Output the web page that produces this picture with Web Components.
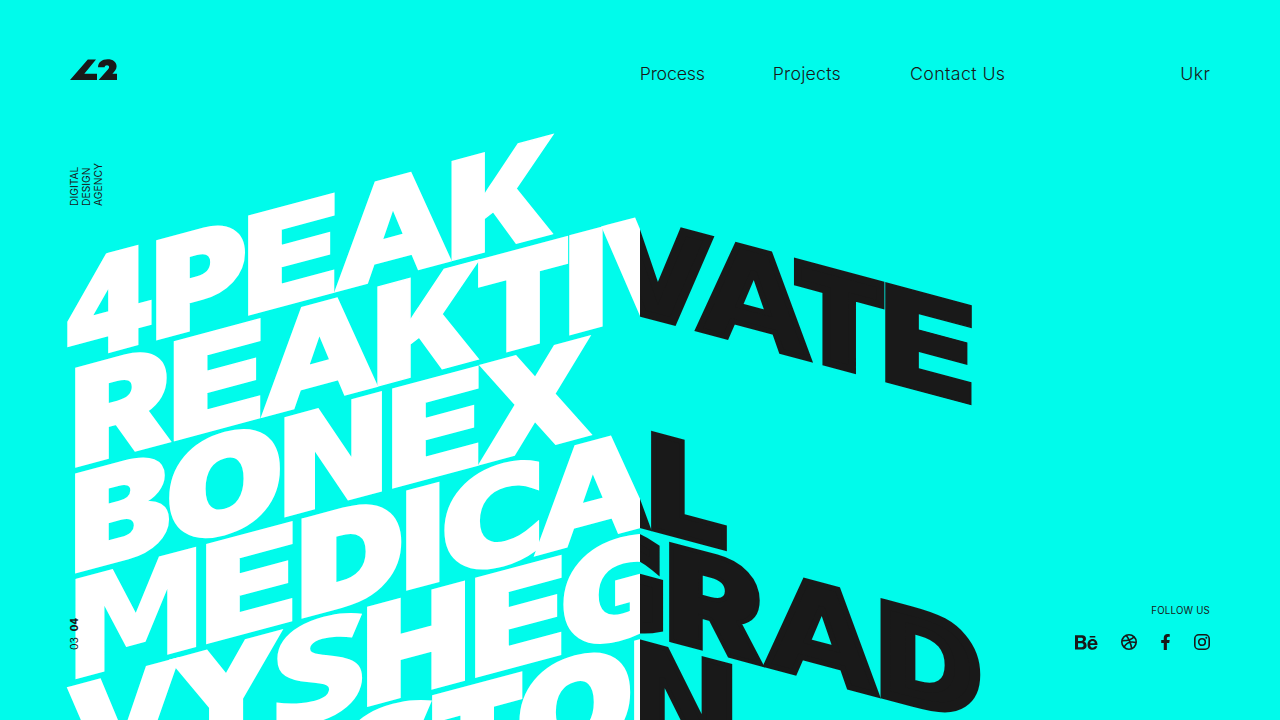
<!DOCTYPE html>
<html lang="en">
<head>
<meta charset="utf-8">
<title>42 — Digital Design Agency</title>
<style>
html,body{margin:0;height:100%;overflow:hidden;background:#00fbeb;color:#191919;font-family:Inter,sans-serif}
</style>
</head>
<body>
<agency-page></agency-page>

<script>
/* Project titles. Each glyph: [char, ink left, ink right] in unfolded page pixels. */
const LINES = [
  {name: '4PEAK', glyphs: [['4',67.3,151.5],['P',156.3,245],['E',248.3,334.6],['A',335.4,450.4],['K',451.3,553.4]]},
  {name: 'REAKTIVATE', glyphs: [['R',75.3,170.2],['E',174,260.6],['A',261.8,376.7],['K',377.3,479.6],['T',478,568.2],['I',569.3,602.7],['V',603.2,712.8],['A',695.6,811.8],['T',793.8,884.5],['E',885.3,971.8]]},
  {name: 'BONEX', glyphs: [['B',75.3,169.2],['O',169.3,280],['N',284.3,382],['E',392.3,478.6],['X',481.6,588.4]]},
  {name: 'MEDICAL', glyphs: [['M',75.3,196],['E',206.3,292.6],['D',301.3,401.3],['I',406.3,439.5],['C',444.5,539],['A',534.9,650.4],['L',651.3,727]]},
  {name: 'VYSHEGRAD', glyphs: [['V',68.6,178],['Y',173,279.2],['S',276.4,362],['H',367.3,465],['E',475.3,561.6],['G',563.3,663],['R',669.3,763.3],['A',763.8,879.6],['D',880.3,980.3]]},
  {name: 'STON', glyphs: [['S',345,431.8],['T',432,522.4],['O',519.5,630.2],['N',634,732.3]]}
];
const TOP = 110.4, PITCH = 105.8, CAP = 100.3, FOLD = 640, EM = 140;
const INTER = '900 # Inter', DEJAVU = '700 # "DejaVu Sans"', OPEN = '800 # "Open Sans"';
/* Face and stem thickness for each letter; the rest use Inter with the default stem. */
const STYLE = {
  4: [DEJAVU, 30], A: [DEJAVU, 31.5], V: [DEJAVU, 31.5], N: [DEJAVU, 30.3], M: [DEJAVU, 28.6],
  X: [DEJAVU, 32.5], Y: [DEJAVU, 32.5], C: [DEJAVU, 33], G: [DEJAVU, 33], O: [DEJAVU, 34],
  D: [DEJAVU, 33.3], S: [OPEN, 31], K: [OPEN, 32.8]
};

/* Ink extents of a glyph around its origin, read from rendered pixels and scaled to EM. */
const SIDE = 640, PX = 420, ORG = {x: 60, y: 480};
const cv = document.createElement('canvas');
cv.width = cv.height = SIDE;
const ctx = cv.getContext('2d', {willReadFrequently: true});
const cache = {};
const ink = (face, ch) => {
  const key = face + ch;
  if (cache[key]) return cache[key];
  ctx.clearRect(0, 0, SIDE, SIDE);
  ctx.font = face.replace('#', PX + 'px');
  ctx.fillText(ch, ORG.x, ORG.y);
  const d = ctx.getImageData(0, 0, SIDE, SIDE).data;
  let x0 = SIDE, x1 = 0, y0 = SIDE, y1 = 0;
  for (let y = 0; y < SIDE; y++) for (let x = 0; x < SIDE; x++)
    if (d[(y * SIDE + x) * 4 + 3] > 110) {
      if (x < x0) x0 = x; if (x + 1 > x1) x1 = x + 1;
      if (y < y0) y0 = y; if (y + 1 > y1) y1 = y + 1;
    }
  const k = EM / PX;
  return cache[key] = {l: (x0 - ORG.x) * k, r: (x1 - ORG.x) * k, t: (ORG.y - y0) * k, b: (y1 - ORG.y) * k};
};

/* One half of the folded poster: skews the title lines away from the centre fold. */
class FoldPane extends HTMLElement {
  connectedCallback() {
    const left = this.getAttribute('side') === 'left';
    const root = this.attachShadow({mode: 'open'});
    let out = '';
    LINES.forEach((line, n) => {
      const shown = line.glyphs.filter(g => left ? g[1] < FOLD : g[2] > FOLD);
      if (!shown.length) return;
      out += `<g aria-label="${line.name}">`;
      for (const [ch, x0, x1] of shown) {
        const [face, stem] = STYLE[ch] || [INTER, 33.3];
        const m = ink(face, ch), l = ink(face, 'l');
        const over = 'OCGS'.includes(ch) ? 1.7 : 0;
        const W = x1 - x0, inkW = m.r - m.l;
        const w = ch === 'I' ? 2 : Math.max(0, (stem * inkW - W * (l.r - l.l)) / (W - stem));
        const sx = W / (inkW + w);
        const sy = (CAP + 2 * over) / (m.t + m.b + w);
        const tx = x0 - (m.l - w / 2) * sx - (left ? 0 : FOLD);
        const ty = TOP + n * PITCH - over + (m.t + w / 2) * sy;
        out += `<text style='font:${face.replace('#', EM + 'px')},sans-serif' stroke-width="${w.toFixed(2)}" transform="matrix(${sx.toFixed(4)} 0 0 ${sy.toFixed(4)} ${tx.toFixed(2)} ${ty.toFixed(2)})">${ch}</text>`;
      }
      out += '</g>';
    });
    root.innerHTML = `<style>
      :host{display:block;overflow:hidden;height:720px}
      svg{display:block;width:640px;height:720px}
      text{fill:currentColor;stroke:currentColor;stroke-linejoin:miter;stroke-miterlimit:3;text-rendering:geometricPrecision}
      </style><svg viewBox="0 0 640 720"><g transform="${left ? 'translate(640 0) skewY(-15) translate(-640 0)' : 'skewY(15)'}">${out}</g></svg>`;
  }
}
customElements.define('fold-pane', FoldPane);

const define = (name, html) => customElements.define(name, class extends HTMLElement {
  constructor() {
    super();
    const t = document.createElement('template');
    t.innerHTML = html;
    this.attachShadow({mode: 'open'}).append(t.content.cloneNode(true));
  }
});

define('brand-mark', `<style>:host{display:block;width:48px;height:22px}svg{display:block}</style>
<svg width="48" height="22" viewBox="0 0 48 22" fill="currentColor"><path d="M0 21 17.8.4h8.2L14.300 14.800H27V21z"/><path d="M28 8.200C28 3.200 32 .2 37.600.2c5.400 0 9 2.700 9 7.100 0 3.300-2 5-4.200 7.400H47V21H28.600l8.200-9.200c1.400-1.600 2.300-2.300 2.300-3.700 0-1.200-.9-1.900-2.100-1.900-1.400 0-2.300.8-2.400 2z"/></svg>`);

define('nav-link', `<style>:host{display:block;font-size:17.800px;font-weight:350;line-height:24px;white-space:nowrap}</style><slot></slot>`);

define('site-header', `<style>
:host{display:grid;grid-template-columns:570px 132.700px 137.300px 1fr auto;padding:59px 70px 0;align-items:start}
nav-link{margin-top:2.500px}
</style>
<brand-mark></brand-mark>
<nav-link style="letter-spacing:-.2px;margin-left:-.3px">Process</nav-link>
<nav-link style="letter-spacing:.22px">Projects</nav-link>
<nav-link style="letter-spacing:.38px">Contact Us</nav-link>
<nav-link style="letter-spacing:.4px;margin-right:-.4px">Ukr</nav-link>`);

define('side-label', `<style>
:host{display:block;writing-mode:vertical-rl;transform:rotate(180deg);line-height:12px;font-size:10.300px;font-weight:400;white-space:nowrap}
</style><slot></slot>`);

define('social-icons', `<style>
:host{display:flex;align-items:center;justify-content:flex-end;height:16px}
svg{display:block;fill:currentColor}
.line{fill:none;stroke:currentColor;stroke-width:1.600}
</style>
<svg width="22.500" height="15" viewBox="0 70 576 370" preserveAspectRatio="none" style="margin-right:23.500px"><path d="M232 237.2c31.8-15.2 48.4-38.2 48.4-74 0-70.6-52.6-87.8-113.3-87.8H0v354.4h171.8c64.4 0 124.9-30.9 124.9-102.9 0-44.5-21.1-77.4-64.700-89.700zM77.900 135.900H151c28.100 0 53.400 7.900 53.400 40.500 0 30.100-19.700 42.200-47.500 42.200h-79v-82.700zm83.300 233.700H77.900V272h84.900c34.300 0 56 14.300 56 50.600 0 35.800-25.900 47-57.600 47zm358.500-240.700H376V94h143.700v34.900zM576 305.200c0-75.900-44.400-139.200-124.900-139.200-78.200 0-131.300 58.800-131.300 135.800 0 79.900 50.300 134.700 131.300 134.700 61.300 0 101-27.600 120.100-86.300H509c-6.700 21.900-34.300 33.500-55.700 33.500-41.300 0-63-24.200-63-65.300h185.100c.3-4.200.6-8.700.6-13.200zM390.400 274c2.300-33.700 24.700-54.800 58.500-54.800 35.400 0 53.200 20.800 56.200 54.800H390.400z"/></svg>
<svg class="line" width="16" height="16" viewBox="0 0 16 16" style="margin-right:24px"><circle cx="8" cy="8" r="7.200"/><path d="M5.300 1.400C8 4.800 9.800 9 10.700 14.600M1 6.600c5 .1 9.600-.7 12.300-3.900M3.100 13.200C5 9.200 9.500 7.200 15 8.600"/></svg>
<svg width="9" height="16" viewBox="16 0 288 512" style="margin-right:24px"><path d="M279.140 288l14.220-92.660h-88.910v-60.130c0-25.350 12.420-50.060 52.240-50.060h40.420V6.260S260.430 0 225.360 0c-73.220 0-121.080 44.380-121.080 124.720v70.620H22.890V288h81.390v224h100.170V288z"/></svg>
<svg class="line" width="16" height="16" viewBox="0 0 16 16"><rect x=".8" y=".8" width="14.400" height="14.400" rx="4"/><circle cx="8" cy="8" r="3.300"/><circle cx="12.300" cy="3.700" r="1" fill="#191919" stroke="none"/></svg>`);

define('follow-us', `<style>
:host{display:grid;justify-items:end;row-gap:16px}
span{font-size:9.700px;line-height:14px;letter-spacing:.2px;font-weight:400}
</style><span>FOLLOW US</span><social-icons></social-icons>`);

define('agency-page', `<style>
:host{display:grid;grid-template:720px/1280px}
.art,.ui{grid-area:1/1}
.art{display:grid;grid-template-columns:640px 640px}
fold-pane[side=left]{color:#fff}
.ui{display:flex;flex-direction:column;z-index:1}
.tag{padding:77px 68px 0;display:flex}
.foot{margin-top:auto;padding:0 70px 70px 68px;display:flex;justify-content:space-between;align-items:flex-end}
b{font-weight:800;font-size:10px;letter-spacing:-.2px}
</style>
<div class="art"><fold-pane side="left"></fold-pane><fold-pane side="right"></fold-pane></div>
<div class="ui">
  <site-header></site-header>
  <div class="tag"><side-label>DIGITAL<br>DESIGN<br>AGENCY</side-label></div>
  <div class="foot"><side-label>03&nbsp; <b>04</b></side-label><follow-us></follow-us></div>
</div>`);
</script>
</body>
</html>
